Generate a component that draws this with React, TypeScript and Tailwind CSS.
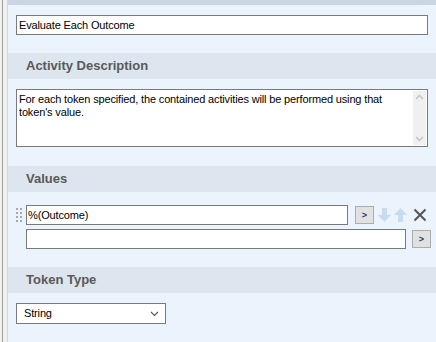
import React from "react";

const font = { fontFamily: '"Liberation Sans", Arial, sans-serif' };

function Header({ title }: { title: string }) {
  return (
    <div className="flex h-[26px] items-center bg-[#dde5ee] pl-[18px] text-[13px] font-bold text-[#595959]">
      {title}
    </div>
  );
}

function ArrowButton() {
  return (
    <button className="flex h-[18px] w-[19px] items-center justify-center border border-[#adadad] bg-[#e1e1e1] text-[9px] font-bold leading-none text-[#1e3a5f]">
      &gt;
    </button>
  );
}

function DragHandle() {
  return (
    <div className="grid w-[6px] grid-cols-2 gap-x-[2px] gap-y-[2px]">
      {Array.from({ length: 8 }).map((_, i) => (
        <span key={i} className="h-[2px] w-[2px] bg-[#a8a8a8]" />
      ))}
    </div>
  );
}

export default function App() {
  return (
    <div className="flex h-[342px] w-[436px] overflow-hidden bg-[#f0f0f0]" style={font}>
      <div className="w-[2px]" />
      <div className="w-[1px] bg-[#a0a0a0]" />
      <div className="w-[4px]" />
      <div className="w-[1px] bg-[#d4d4d4]" />

      <div className="flex flex-1 flex-col bg-[#ebf3fd]">
        <div className="h-[5px] bg-[#c9d6e3]" />

        <div className="px-[8px] pt-[10px] pb-[18px]">
          <div className="flex h-[20px] items-center border border-[#7a7a7a] bg-white pl-[2px] text-[11px] tracking-[-0.15px] text-black">
            Evaluate Each Outcome
          </div>
        </div>

        <Header title="Activity Description" />

        <div className="px-[8px] pt-[10px] pb-[19px]">
          <div className="flex h-[58px] border border-[#7a7a7a] bg-white">
            <p className="flex-1 pl-[2px] pt-[3px] text-[11px] leading-[13px] tracking-[-0.15px] text-black">
              For each token specified, the contained activities will be performed using that token's value.
            </p>
            <div className="m-[1px] flex w-[13px] flex-col items-center justify-between bg-[#f0f0f0] py-[3px]">
              <svg width="9" height="6" viewBox="0 0 9 6" fill="none">
                <path d="M1 5 L4.5 1.5 L8 5" stroke="#c2c2c2" strokeWidth="1.3" />
              </svg>
              <svg width="9" height="6" viewBox="0 0 9 6" fill="none">
                <path d="M1 1 L4.5 4.5 L8 1" stroke="#c2c2c2" strokeWidth="1.3" />
              </svg>
            </div>
          </div>
        </div>

        <Header title="Values" />

        <div className="flex flex-col gap-[4px] pt-[13px] pb-[18px]">
          <div className="flex items-center">
            <div className="flex w-[18px] justify-end pr-[4px]">
              <DragHandle />
            </div>
            <div className="flex h-[20px] w-[322px] items-center border border-[#7a7a7a] bg-white pl-[1px] text-[11px] tracking-[-0.15px] text-black">
              %(Outcome)
            </div>
            <div className="ml-[7px]">
              <ArrowButton />
            </div>
            <svg className="ml-[3px]" width="15" height="16" viewBox="0 0 15 16">
              <path d="M5 1 H10 V8 H14 L7.5 15 L1 8 H5 Z" fill="#c8dcef" />
            </svg>
            <svg className="ml-[1px]" width="15" height="16" viewBox="0 0 15 16">
              <path d="M5 15 H10 V8 H14 L7.5 1 L1 8 H5 Z" fill="#c8dcef" />
            </svg>
            <svg className="ml-[5px]" width="14" height="14" viewBox="0 0 14 14">
              <path d="M1.5 1.5 L12.5 12.5 M12.5 1.5 L1.5 12.5" stroke="#555555" strokeWidth="2" />
            </svg>
          </div>
          <div className="flex items-center">
            <div className="w-[18px]" />
            <div className="h-[20px] w-[380px] border border-[#7a7a7a] bg-white" />
            <div className="ml-[6px]">
              <ArrowButton />
            </div>
          </div>
        </div>

        <Header title="Token Type" />

        <div className="px-[8px] pt-[10px]">
          <div className="flex h-[21px] w-[150px] items-center justify-between border border-[#7a7a7a] bg-white pl-[7px] pr-[6px] text-[11px] tracking-[-0.15px] text-black">
            <span>String</span>
            <svg width="9" height="6" viewBox="0 0 9 6" fill="none">
              <path d="M1 1 L4.5 4.5 L8 1" stroke="#555555" strokeWidth="1.1" />
            </svg>
          </div>
        </div>
      </div>
    </div>
  );
}
